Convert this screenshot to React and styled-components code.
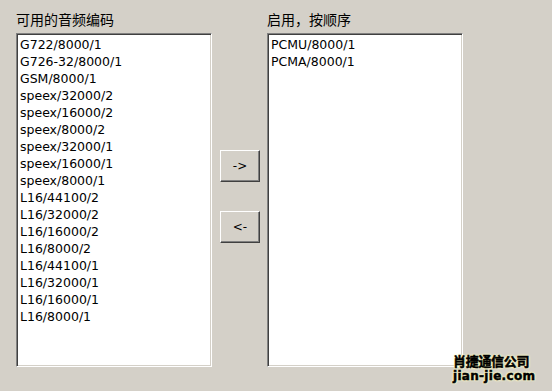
import React from 'react'
import styled, { createGlobalStyle } from 'styled-components'

const available = [
    'G722/8000/1',
    'G726-32/8000/1',
    'GSM/8000/1',
    'speex/32000/2',
    'speex/16000/2',
    'speex/8000/2',
    'speex/32000/1',
    'speex/16000/1',
    'speex/8000/1',
    'L16/44100/2',
    'L16/32000/2',
    'L16/16000/2',
    'L16/8000/2',
    'L16/44100/1',
    'L16/32000/1',
    'L16/16000/1',
    'L16/8000/1',
]

const enabled = ['PCMU/8000/1', 'PCMA/8000/1']

const App = () => {
    return (
        <>
            <GlobalStyle />
            <Page>
                <Column>
                    <Label>可用的音频编码</Label>
                    <ListBox>
                        {available.map((c) => (
                            <Item key={c}>{c}</Item>
                        ))}
                    </ListBox>
                </Column>
                <Buttons>
                    <MoveButton>-&gt;</MoveButton>
                    <MoveButton>&lt;-</MoveButton>
                </Buttons>
                <Column>
                    <Label>启用，按顺序</Label>
                    <ListBox>
                        {enabled.map((c) => (
                            <Item key={c}>{c}</Item>
                        ))}
                    </ListBox>
                </Column>
                <Watermark>
                    <div className="cn">肖捷通信公司</div>
                    <div className="en">jian-jie.com</div>
                </Watermark>
            </Page>
        </>
    )
}

export default App

const GlobalStyle = createGlobalStyle`
    html, body {
        margin: 0;
        padding: 0;
        background-color: #d4d0c8;
    }
    * {
        box-sizing: border-box;
    }
`

const Page = styled.div`
    position: relative;
    width: 552px;
    height: 391px;
    display: flex;
    align-items: flex-start;
    padding: 10px 0 0 16px;
    background-color: #d4d0c8;
    color: #000;
    font-family: "DejaVu Sans", Tahoma, sans-serif;
`

const Column = styled.div`
    display: flex;
    flex-direction: column;
    width: 196px;
`

const Label = styled.div`
    height: 23px;
    font-family: "Noto Sans CJK SC", sans-serif;
    font-size: 14px;
    line-height: 18px;
    color: #000;
`

const ListBox = styled.div`
    height: 334px;
    background-color: #fff;
    border: 1px solid;
    border-color: #808080 #fff #fff #808080;
    box-shadow: inset 1px 1px 0 #404040, inset -1px -1px 0 #d4d0c8;
    padding: 2px 3px;
    overflow: hidden;
`

const Item = styled.div`
    font-size: 12.5px;
    line-height: 17px;
    white-space: nowrap;
`

const Buttons = styled.div`
    display: flex;
    flex-direction: column;
    gap: 29px;
    width: 40px;
    margin: 140px 7px 0 8px;
`

const MoveButton = styled.button`
    width: 40px;
    height: 32px;
    padding: 0;
    background-color: #d4d0c8;
    border: 1px solid;
    border-color: #fff #404040 #404040 #fff;
    box-shadow: inset -1px -1px 0 #808080;
    font-family: "DejaVu Sans", Tahoma, sans-serif;
    font-size: 12px;
    color: #000;
`

const Watermark = styled.div`
    position: absolute;
    left: 453px;
    top: 353px;
    font-weight: bold;
    color: #000;
    -webkit-text-stroke: 0.5px #000;
    text-shadow: 0 0 3px #fffbc0, 0 0 3px #fffbc0, 0 0 2px #fffbc0, 0 0 1px #fffbc0;

    .cn {
        font-family: "Noto Sans CJK SC", sans-serif;
        font-size: 13px;
        line-height: 16px;
        letter-spacing: -0.3px;
    }

    .en {
        font-family: "DejaVu Sans", sans-serif;
        font-size: 12px;
        line-height: 14px;
        letter-spacing: 0.3px;
    }
`
